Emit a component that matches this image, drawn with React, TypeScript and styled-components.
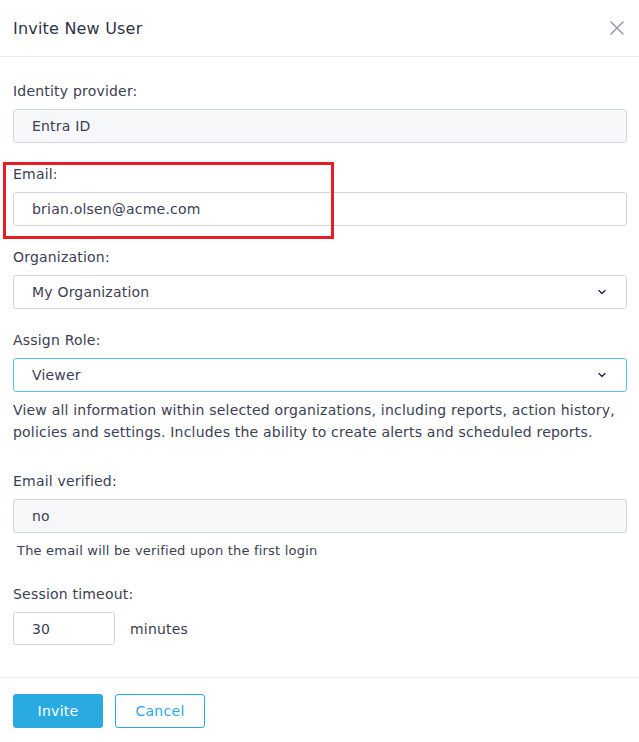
import React from 'react';
import styled, { createGlobalStyle } from 'styled-components';

const GlobalStyle = createGlobalStyle`
  html, body {
    margin: 0;
    padding: 0;
    background: #ffffff;
  }
  body {
    font-family: 'DejaVu Sans', 'Open Sans', sans-serif;
    letter-spacing: 0.2px;
    color: #3b4052;
  }
`;

// --- Layout ---
const Modal = styled.div`
  position: relative;
  width: 639px;
  height: 742px;
  display: flex;
  flex-direction: column;
  background: #fff;
`;

const Header = styled.div`
  height: 57px;
  box-sizing: border-box;
  padding: 0 13px;
  display: flex;
  align-items: center;
  justify-content: space-between;
  border-bottom: 1px solid #ebecef;
`;

const Title = styled.h2`
  margin: 0;
  font-size: 16px;
  font-weight: 500;
  color: #2f3446;
`;

const CloseButton = styled.button`
  border: none;
  background: none;
  padding: 0;
  width: 18px;
  height: 18px;
  color: #9a9eab;
  cursor: pointer;
  display: flex;
  align-items: center;
  justify-content: center;
`;

const Body = styled.div`
  flex: 1;
  padding: 24px 12px 0 13px;
  display: flex;
  flex-direction: column;
`;

const Field = styled.div<{ $gap?: number }>`
  display: flex;
  flex-direction: column;
  margin-bottom: ${(p) => p.$gap ?? 21}px;
`;

const Label = styled.label`
  font-size: 14px;
  line-height: 20px;
  color: #3b4052;
  margin-bottom: 8px;
`;

const Input = styled.div<{ $disabled?: boolean; $focus?: boolean }>`
  height: 34px;
  box-sizing: border-box;
  padding: 0 18px;
  display: flex;
  align-items: center;
  justify-content: space-between;
  font-size: 14px;
  color: #3b4052;
  border: 1px solid ${(p) => (p.$focus ? '#5bc0ec' : '#d3d5dd')};
  border-radius: 3px;
  background: ${(p) => (p.$disabled ? '#f6f7f9' : '#fff')};
`;

const Chevron = styled.span`
  display: flex;
  color: #2f3446;
`;

const Help = styled.p`
  margin: 7px 0 0;
  font-size: 14px;
  line-height: 22px;
  color: #3b4052;
`;

const SmallHelp = styled.p`
  margin: 9px 0 0 4px;
  font-size: 13px;
  line-height: 18px;
  color: #3b4052;
`;

const TimeoutRow = styled.div`
  display: flex;
  align-items: center;
  gap: 15px;
  font-size: 14px;
`;

const SmallInput = styled(Input)`
  width: 102px;
  height: 33px;
`;

const Footer = styled.div`
  height: 65px;
  box-sizing: border-box;
  border-top: 1px solid #ebecef;
  padding: 16px 13px 0;
  display: flex;
  align-items: flex-start;
  gap: 12px;
`;

const Button = styled.button<{ $primary?: boolean }>`
  width: 90px;
  height: 34px;
  border-radius: 3px;
  font-family: inherit;
  font-size: 14px;
  font-weight: 500;
  letter-spacing: 0.3px;
  cursor: pointer;
  border: 1px solid #29abe2;
  background: ${(p) => (p.$primary ? '#29abe2' : '#fff')};
  color: ${(p) => (p.$primary ? '#fff' : '#29abe2')};
`;

const Highlight = styled.div`
  position: absolute;
  left: 3px;
  top: 162px;
  width: 331px;
  height: 77px;
  box-sizing: border-box;
  border: 3px solid #e61e25;
  pointer-events: none;
`;

const ChevronIcon = () => (
  <svg width="12" height="12" viewBox="0 0 12 12" fill="none">
    <path d="M3 4.5L6 7.5L9 4.5" stroke="currentColor" strokeWidth="1.5" strokeLinecap="round" strokeLinejoin="round" />
  </svg>
);

const CloseIcon = () => (
  <svg width="14" height="14" viewBox="0 0 14 14" fill="none">
    <path d="M1 1L13 13M13 1L1 13" stroke="currentColor" strokeWidth="1.6" strokeLinecap="round" />
  </svg>
);

const App = () => (
  <>
    <GlobalStyle />
    <Modal>
      <Header>
        <Title>Invite New User</Title>
        <CloseButton aria-label="Close">
          <CloseIcon />
        </CloseButton>
      </Header>
      <Body>
        <Field>
          <Label>Identity provider:</Label>
          <Input $disabled>Entra ID</Input>
        </Field>
        <Field>
          <Label>Email:</Label>
          <Input>brian.olsen@acme.com</Input>
        </Field>
        <Field>
          <Label>Organization:</Label>
          <Input>
            My Organization
            <Chevron>
              <ChevronIcon />
            </Chevron>
          </Input>
        </Field>
        <Field $gap={28}>
          <Label>Assign Role:</Label>
          <Input $focus>
            Viewer
            <Chevron>
              <ChevronIcon />
            </Chevron>
          </Input>
          <Help>
            View all information within selected organizations, including reports, action history,
            policies and settings. Includes the ability to create alerts and scheduled reports.
          </Help>
        </Field>
        <Field $gap={24}>
          <Label>Email verified:</Label>
          <Input $disabled>no</Input>
          <SmallHelp>The email will be verified upon the first login</SmallHelp>
        </Field>
        <Field>
          <Label>Session timeout:</Label>
          <TimeoutRow>
            <SmallInput>30</SmallInput>
            minutes
          </TimeoutRow>
        </Field>
      </Body>
      <Footer>
        <Button $primary>Invite</Button>
        <Button>Cancel</Button>
      </Footer>
      <Highlight />
    </Modal>
  </>
);

export default App;
